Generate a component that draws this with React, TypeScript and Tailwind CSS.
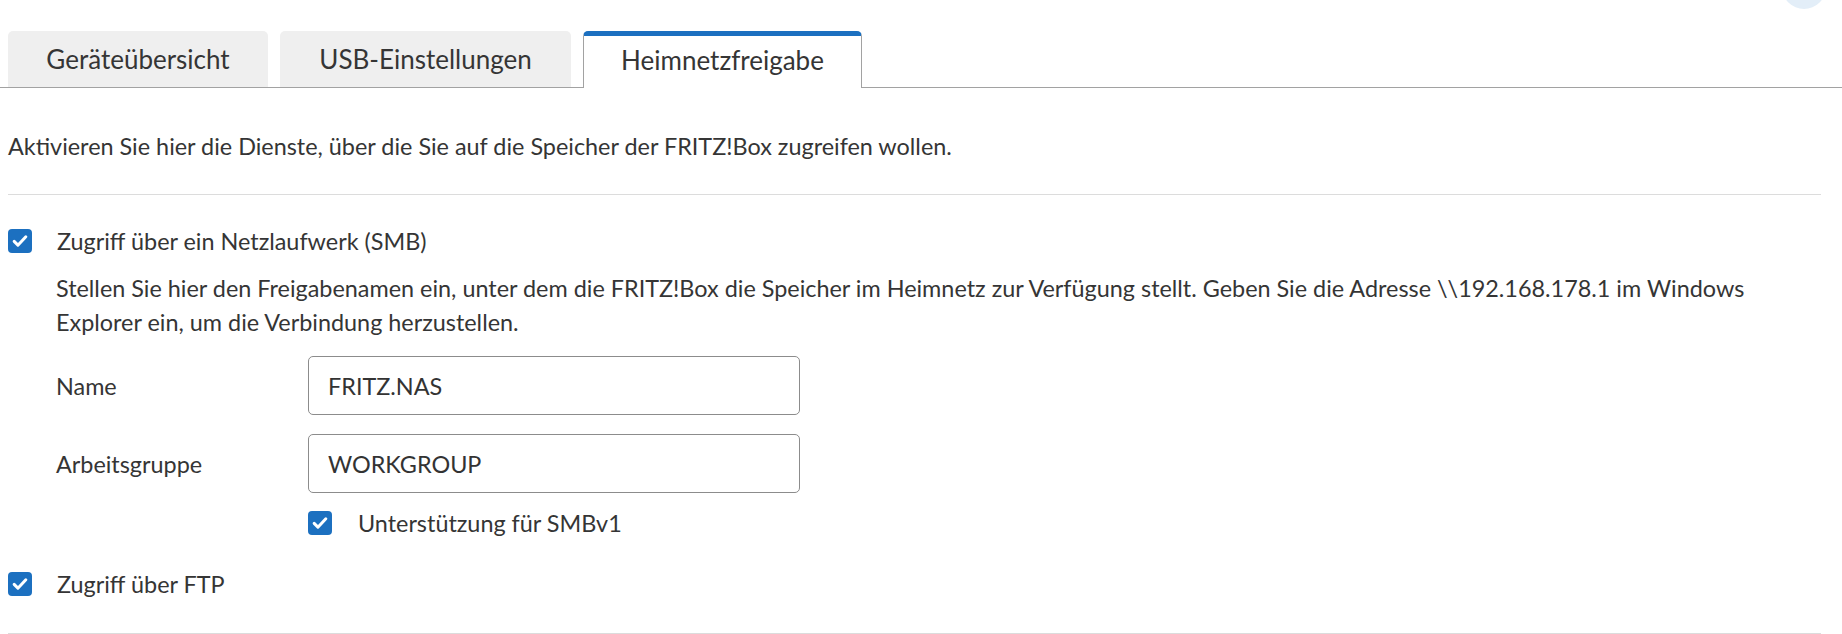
import React, { useState } from 'react';

const TABS = [
  { label: 'Geräteübersicht', width: 'w-[260px]' },
  { label: 'USB-Einstellungen', width: 'w-[291px]' },
  { label: 'Heimnetzfreigabe', width: 'w-[279px]' },
];

const ADDRESS = '\\\\192.168.178.1';

interface CheckboxProps {
  checked: boolean;
  onChange: () => void;
}

const Checkbox: React.FC<CheckboxProps> = ({ checked, onChange }) => (
  <button
    type="button"
    onClick={onChange}
    aria-pressed={checked}
    className={`w-[24px] h-[24px] rounded-[4px] flex items-center justify-center shrink-0 ${
      checked ? 'bg-[#1c70c0]' : 'bg-white border-2 border-[#8c8c8c]'
    }`}
  >
    {checked && (
      <svg viewBox="0 0 24 24" className="w-[20px] h-[20px]" fill="none" stroke="white" strokeWidth="3.6" strokeLinecap="round" strokeLinejoin="round">
        <path d="M5 12.5l4.5 4.5L19 7" />
      </svg>
    )}
  </button>
);

interface FieldProps {
  label: string;
  value: string;
  onChange: (v: string) => void;
}

const Field: React.FC<FieldProps> = ({ label, value, onChange }) => (
  <div className="flex items-center">
    <label className="w-[300px] shrink-0 pl-[48px] leading-[34px]">{label}</label>
    <input
      value={value}
      onChange={e => onChange(e.target.value)}
      className="w-[492px] h-[59px] border border-[#8c8c8c] rounded-[5px] pl-[19px] text-[23.4px] text-[#333] outline-none bg-white"
    />
  </div>
);

const App: React.FC = () => {
  const [activeTab, setActiveTab] = useState(2);
  const [smb, setSmb] = useState(true);
  const [smbv1, setSmbv1] = useState(true);
  const [ftp, setFtp] = useState(true);
  const [name, setName] = useState('FRITZ.NAS');
  const [workgroup, setWorkgroup] = useState('WORKGROUP');

  return (
    <div className="relative w-full h-[634px] overflow-hidden bg-white text-[#353535] font-['Lato',sans-serif] text-[23.4px]">
      <div className="absolute top-[-35px] left-[1782px] w-[44px] h-[44px] rounded-full bg-[#e3eef8]" />

      <div className="pt-[31px] flex gap-[12px] pl-[8px] border-b border-[#a2a2a2]">
        {TABS.map((tab, i) => (
          <button
            key={tab.label}
            onClick={() => setActiveTab(i)}
            className={`${tab.width} h-[56px] rounded-t-[5px] text-[26px] flex items-center justify-center ${
              i === activeTab
                ? 'bg-white border-x border-[#a2a2a2] border-t-[5px] border-t-[#1c70c0] -mb-px h-[57px] pb-[4px]'
                : 'bg-[#efefef]'
            }`}
          >
            {tab.label}
          </button>
        ))}
      </div>

      <div className="pl-[8px] pr-[21px]">
        <p className="mt-[41px] leading-[34px]">
          Aktivieren Sie hier die Dienste, über die Sie auf die Speicher der FRITZ!Box zugreifen wollen.
        </p>

        <div className="mt-[31px] border-t border-[#dcdcdc]">
          <div className="mt-[29px] flex items-center gap-[25px] leading-[34px]">
            <Checkbox checked={smb} onChange={() => setSmb(!smb)} />
            <span>Zugriff über ein Netzlaufwerk (SMB)</span>
          </div>

          {smb && (
            <>
              <p className="mt-[13px] pl-[48px] leading-[34px]">
                Stellen Sie hier den Freigabenamen ein, unter dem die FRITZ!Box die Speicher im Heimnetz zur Verfügung stellt. Geben Sie die Adresse {ADDRESS} im Windows
                <br />
                Explorer ein, um die Verbindung herzustellen.
              </p>
              <div className="mt-[17px] flex flex-col gap-[19px]">
                <Field label="Name" value={name} onChange={setName} />
                <Field label="Arbeitsgruppe" value={workgroup} onChange={setWorkgroup} />
              </div>
              <div className="mt-[13px] pl-[300px] flex items-center gap-[26px] leading-[34px]">
                <Checkbox checked={smbv1} onChange={() => setSmbv1(!smbv1)} />
                <span>Unterstützung für SMBv1</span>
              </div>
            </>
          )}

          <div className="mt-[27px] flex items-center gap-[25px] leading-[34px]">
            <Checkbox checked={ftp} onChange={() => setFtp(!ftp)} />
            <span>Zugriff über FTP</span>
          </div>

          <div className="mt-[32px] border-t border-[#dcdcdc]" />
        </div>
      </div>
    </div>
  );
};

export default App;
